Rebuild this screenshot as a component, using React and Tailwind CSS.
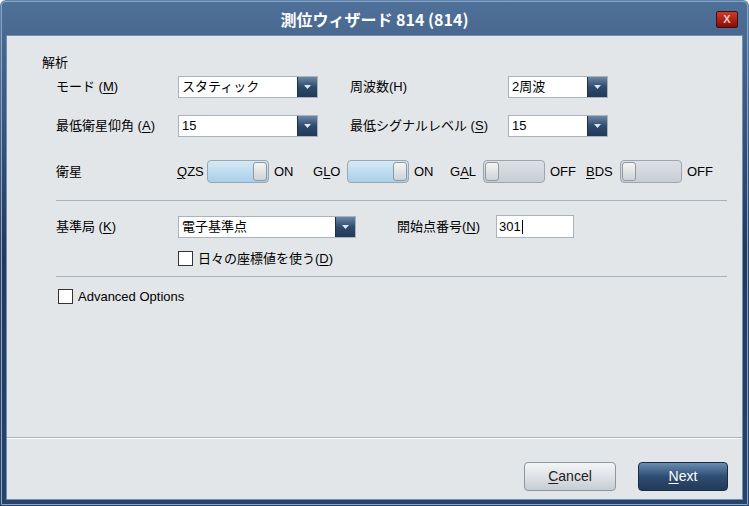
import React from 'react';

const font = { fontFamily: '"Liberation Sans", "Noto Sans CJK JP", sans-serif' };

function Combo({ value, width }) {
  return (
    <div className={`flex h-[22px] ${width} border border-[#a9b3bd] bg-white`}>
      <span className="flex-1 pl-[3px] text-[13px] leading-[20px] text-black">{value}</span>
      <span className="flex w-[20px] items-center justify-center border-l border-[#1c2f47] bg-gradient-to-b from-[#6d87a6] via-[#2e4a6d] to-[#233a58]">
        <svg width="7" height="4" viewBox="0 0 7 4"><path d="M0 0h7L3.5 4z" fill="#dfe7f0" /></svg>
      </span>
    </div>
  );
}

function Toggle({ on }) {
  return (
    <div className={`flex h-[23px] w-[62px] rounded-[4px] border border-[#9aa6b2] p-[1px] ${on ? 'justify-end bg-gradient-to-b from-[#d6e9f6] to-[#a9cfe8]' : 'justify-start bg-gradient-to-b from-[#dde1e6] to-[#c8cdd3]'}`}>
      <span className="h-full w-[14px] rounded-[3px] border border-[#8f99a4] bg-gradient-to-b from-[#f4f5f6] to-[#cfd3d7]" />
    </div>
  );
}

function U({ children }) {
  return <span className="underline underline-offset-2">{children}</span>;
}

function Check() {
  return <span className="inline-block h-[15px] w-[15px] border border-[#333] bg-white" />;
}

export default function App() {
  return (
    <div style={font} className="h-[506px] w-[749px] overflow-hidden rounded-t-[6px] bg-gradient-to-b from-[#5d83ad] via-[#2a4568] to-[#2a4568] p-[1px] text-[13px] text-black">
      <div className="flex h-full flex-col rounded-t-[5px] border border-[#8aa6c6] bg-gradient-to-b from-[#4f7099] via-[#223a5c] to-[#27436a]">
        {/* title bar */}
        <div className="relative flex h-[33px] items-center justify-center">
          <span className="text-[16px] font-bold text-white" style={{ fontFamily: '"Noto Sans CJK JP", "Liberation Sans", sans-serif' }}>測位ウィザード 814 (814)</span>
          <div className="absolute right-[9px] top-[9px] flex h-[17px] w-[22px] items-center justify-center rounded-[2px] border border-[#3a1010] bg-gradient-to-b from-[#d03a2a] to-[#8a0a05]">
            <span className="text-[11px] font-bold leading-none text-[#f0c8c0]">X</span>
          </div>
        </div>

        {/* client area */}
        <div className="mx-[4px] mb-[4px] flex flex-1 flex-col border border-[#6f8fb3] bg-[#e3e6e9]">
          <div className="flex-1 pl-[35px] pr-[15px] pt-[19px]">
            <div className="leading-[16px]">解析</div>

            <div className="mt-[5px] flex items-center pl-[14px]">
              <span className="w-[122px]">モード (<U>M</U>)</span>
              <Combo value="スタティック" width="w-[140px]" />
              <span className="ml-[32px] w-[158px]">周波数(H)</span>
              <Combo value="2周波" width="w-[100px]" />
            </div>

            <div className="mt-[17px] flex items-center pl-[14px]">
              <span className="w-[122px]">最低衛星仰角 (<U>A</U>)</span>
              <Combo value="15" width="w-[140px]" />
              <span className="ml-[32px] w-[158px]">最低シグナルレベル (<U>S</U>)</span>
              <Combo value="15" width="w-[100px]" />
            </div>

            <div className="mt-[23px] flex items-center pl-[14px]">
              <span className="w-[121px]">衛星</span>
              <span className="w-[30px]"><U>Q</U>ZS</span>
              <Toggle on />
              <span className="ml-[5px] w-[39px]">ON</span>
              <span className="w-[34px]">G<U>L</U>O</span>
              <Toggle on />
              <span className="ml-[5px] w-[36px]">ON</span>
              <span className="w-[33px]">G<U>A</U>L</span>
              <Toggle />
              <span className="ml-[5px] w-[36px]">OFF</span>
              <span className="w-[34px]"><U>B</U>DS</span>
              <Toggle />
              <span className="ml-[5px]">OFF</span>
            </div>

            <div className="mt-[17px] ml-[14px] h-px bg-[#a8b2bc]" />

            <div className="mt-[14px] flex items-center pl-[14px]">
              <span className="w-[122px]">基準局 (<U>K</U>)</span>
              <Combo value="電子基準点" width="w-[178px]" />
              <span className="ml-[41px] w-[99px]">開始点番号(<U>N</U>)</span>
              <div className="flex h-[23px] w-[78px] items-center border border-[#a9b3bd] bg-white pl-[2px]">
                301<span className="ml-px inline-block h-[14px] w-px bg-black" />
              </div>
            </div>

            <div className="mt-[11px] flex items-center gap-[5px] pl-[136px]">
              <Check />
              <span>日々の座標値を使う(<U>D</U>)</span>
            </div>

            <div className="mt-[7px] ml-[14px] h-px bg-[#a8b2bc]" />

            <div className="mt-[10px] flex items-center gap-[5px] pl-[16px]">
              <Check />
              <span>Advanced Options</span>
            </div>
          </div>

          <div className="h-[2px] border-t border-[#a8b2bc] bg-white" />

          <div className="flex h-[60px] items-start justify-end gap-[22px] pr-[14px] pt-[23px]">
            <button className="h-[29px] w-[92px] rounded-[4px] border border-[#8d97a2] bg-gradient-to-b from-[#f3f4f6] via-[#dfe3e7] to-[#c5ccd3] text-[14px] text-[#222]">
              <U>C</U>ancel
            </button>
            <button className="h-[29px] w-[90px] rounded-[4px] border border-[#1b2c42] bg-gradient-to-b from-[#6a8db3] via-[#2f4d72] to-[#223a5a] text-[14px] text-white">
              <U>N</U>ext
            </button>
          </div>
        </div>
      </div>
    </div>
  );
}
